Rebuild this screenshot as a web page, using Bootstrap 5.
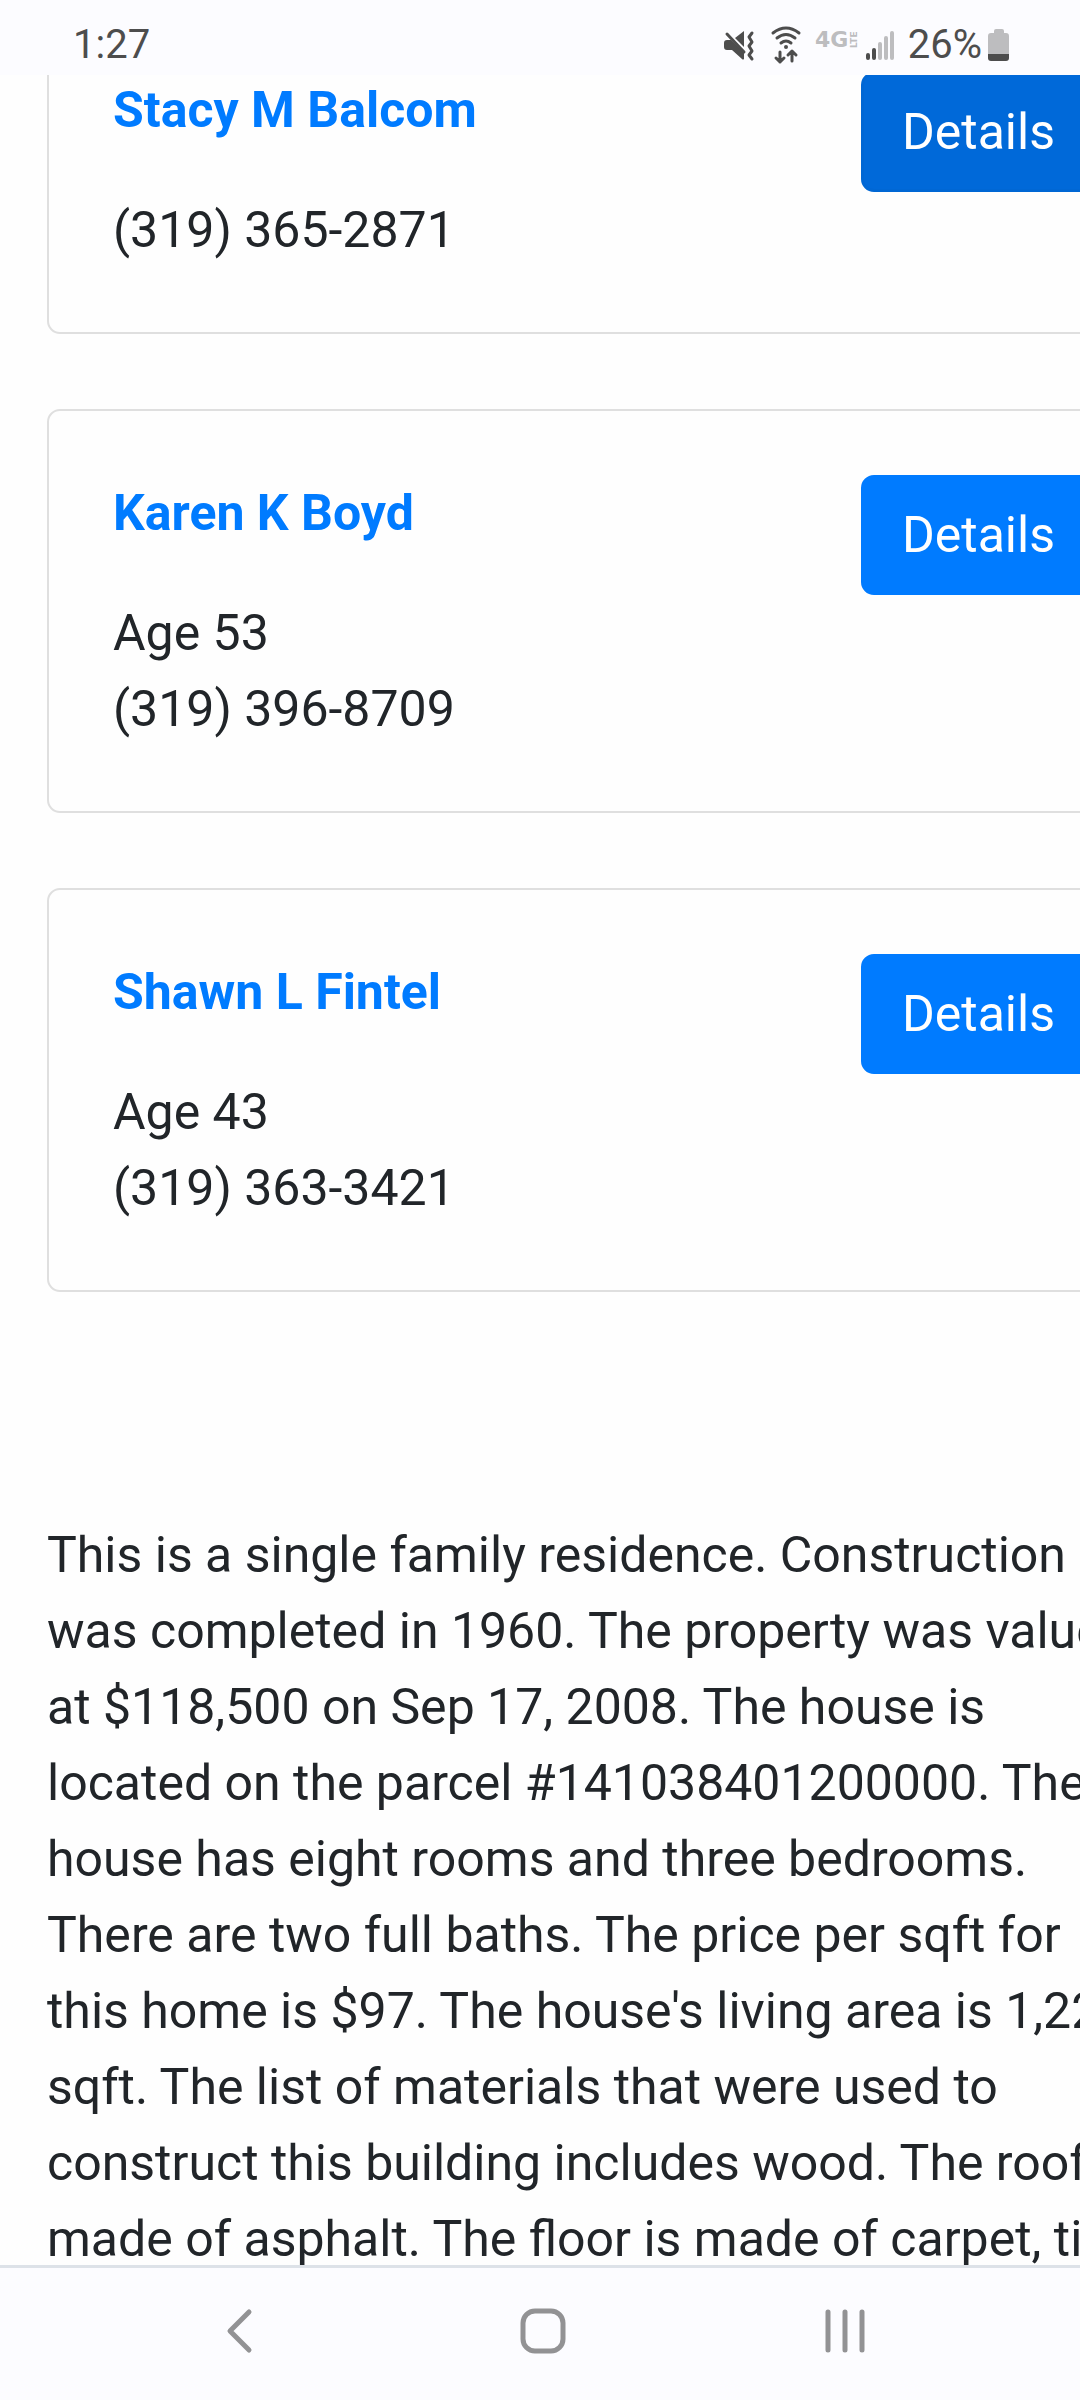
<!DOCTYPE html>
<html lang="en">
<head>
<meta charset="utf-8">
<meta name="viewport" content="width=device-width, initial-scale=1">
<title>Property residents</title>
<link href="https://cdn.jsdelivr.net/npm/bootstrap@5.3.0/dist/css/bootstrap.min.css" rel="stylesheet">
<script src="https://cdn.jsdelivr.net/npm/bootstrap@5.3.0/dist/js/bootstrap.bundle.min.js"></script>
<style>
  body {
    font-family: Roboto, "Liberation Sans", sans-serif;
    font-size: 50px;
    line-height: 76px;
    color: #212529;
    background: #fefefe;
  }
  .system-bar { background: #fcfcff; color: #4d4d4d; }
  .status-bar { height: 75px; padding: 0 69px 0 73px; font-size: 40px; line-height: 60px; }
  .status-text { padding-top: 15px; }
  .status-icons { gap: 13px; }
  .status-icons svg { height: 75px; }
  .network-group { gap: 6px; }
  .battery-level { gap: 5px; }
  .page-view { min-height: 0; }
  /* the page is wider than the screen and scrolled part of the way down */
  .page-sheet { margin: -69px -82px 0 47px; }
  .resident-list { gap: 75px; }
  .resident { border: 2px solid #dfdfdf; border-radius: 13px; background: #fefefe; }
  .resident .card-body { padding: 64px; }
  .resident-head { height: 120px; }
  .resident-name { color: #007bff; font-size: 50px; line-height: 76px; }
  .details-btn {
    --bs-btn-bg: #007bff;
    --bs-btn-border-color: #007bff;
    --bs-btn-hover-bg: #0069d9;
    --bs-btn-active-bg: #0069d9;
    --bs-btn-active-border-color: #0067d4;
    --bs-btn-font-size: 50px;
    --bs-btn-line-height: 76px;
    --bs-btn-padding-x: 38px;
    --bs-btn-padding-y: 19px;
    --bs-btn-border-width: 3px;
    --bs-btn-border-radius: 13px;
  }
  .summary { padding: 225px 18px 0 0; }
  .nav-keys { height: 135px; border-top: 3px solid #dde2e8; padding: 0 197px 6px 203px; }
  .nav-keys button { width: 76px; height: 76px; }
</style>
</head>
<body class="vh-100 d-flex flex-column overflow-hidden">

<header class="system-bar status-bar d-flex justify-content-between align-items-center flex-shrink-0">
  <span class="status-text">1:27</span>
  <div class="status-icons d-flex align-items-center">
    <svg width="36" viewBox="720 0 36 75" fill="#4d4d4d" aria-label="Muted">
      <path d="M734 38l9-7v16z"/>
      <path d="M723 43q0-3 3-3h4l13 13v6q-1 1-2 0l-10-9h-5q-3 0-3-3z"/>
      <path d="M726 34L743 52" stroke="#4d4d4d" stroke-width="3" stroke-linecap="round"/>
      <path d="M751 33l-3 4 3 5-3 4 3 5-3 4 3 4" fill="none" stroke="#4d4d4d" stroke-width="3" stroke-linecap="round" stroke-linejoin="round"/>
    </svg>
    <svg width="32" viewBox="769 0 32 75" fill="none" stroke="#4d4d4d" stroke-width="3" stroke-linecap="round" stroke-linejoin="round" aria-label="Wi-Fi">
      <path d="M772 33q13-10 26 0M776 38q9-7 18 0M780 43q5-4 10 0"/>
      <circle cx="785" cy="47" r="2" fill="#4d4d4d" stroke="none"/>
      <path d="M779 52v10m-4-4l4 4 4-4M791 61V51m-4 4l4-4 4 4"/>
    </svg>
    <div class="network-group d-flex align-items-center">
      <svg width="44" viewBox="815 0 44 75" fill="#bdbdbf" font-family="DejaVu Sans, sans-serif" font-weight="bold">
        <text x="815" y="47" font-size="22">4G</text>
        <text transform="translate(857 48) rotate(-90)" font-size="9">LTE</text>
      </svg>
      <div class="battery-level d-flex align-items-center">
        <svg width="38" viewBox="870 0 38 75" stroke-width="4" stroke-linecap="round" aria-label="Signal">
          <path d="M873 55v3M879 50v8" stroke="#4d4d4d"/>
          <path d="M885 44v14M891 38v20M897 33v25" stroke="#bdbdbf"/>
        </svg>
        <span class="status-text">26%</span>
        <svg width="24" viewBox="986 0 24 75" aria-label="Battery">
          <path d="M993 31q0-2 2-2h6q2 0 2 2v2h2q3 0 3 3v19h-21V36q0-3 3-3h3z" fill="#bdbdbf"/>
          <path d="M987 54h21v4q0 3-3 3h-15q-3 0-3-3z" fill="#4d4d4d"/>
        </svg>
      </div>
    </div>
  </div>
</header>

<main class="page-view flex-grow-1 overflow-hidden">
  <div class="page-sheet">
    <div class="resident-list d-flex flex-column">
      <article class="card resident">
        <div class="card-body">
          <div class="resident-head d-flex justify-content-between align-items-start">
            <h2 class="resident-name fw-bold mb-0">Stacy M Balcom</h2>
            <button type="button" class="btn btn-primary details-btn active">Details</button>
          </div>
          <div>(319) 365-2871</div>
        </div>
      </article>
      <article class="card resident">
        <div class="card-body">
          <div class="resident-head d-flex justify-content-between align-items-start">
            <h2 class="resident-name fw-bold mb-0">Karen K Boyd</h2>
            <button type="button" class="btn btn-primary details-btn">Details</button>
          </div>
          <div>Age 53</div>
          <div>(319) 396-8709</div>
        </div>
      </article>
      <article class="card resident">
        <div class="card-body">
          <div class="resident-head d-flex justify-content-between align-items-start">
            <h2 class="resident-name fw-bold mb-0">Shawn L Fintel</h2>
            <button type="button" class="btn btn-primary details-btn">Details</button>
          </div>
          <div>Age 43</div>
          <div>(319) 363-3421</div>
        </div>
      </article>
    </div>
    <p class="summary mb-0">This is a single family residence. Construction was completed in 1960. The property was valued at $118,500 on Sep 17, 2008. The house is located on the parcel #141038401200000. The house has eight rooms and three bedrooms. There are two full baths. The price per sqft for this home is $97. The house's living area is 1,220 sqft. The list of materials that were used to construct this building includes wood. The roof is made of asphalt. The floor is made of carpet, tile.</p>
  </div>
</main>

<nav class="system-bar nav-keys d-flex justify-content-between align-items-center flex-shrink-0" aria-label="System">
  <button type="button" class="btn border-0 p-0 d-flex" aria-label="Back">
    <svg width="76" height="76" viewBox="0 0 76 76" fill="none" stroke="#929294" stroke-width="5" stroke-linecap="round" stroke-linejoin="round"><path d="M46 19L27 38l19 19"/></svg>
  </button>
  <button type="button" class="btn border-0 p-0 d-flex" aria-label="Home">
    <svg width="76" height="76" viewBox="0 0 76 76" fill="none" stroke="#929294" stroke-width="5"><rect x="18" y="18" width="40" height="40" rx="12"/></svg>
  </button>
  <button type="button" class="btn border-0 p-0 d-flex" aria-label="Recent apps">
    <svg width="76" height="76" viewBox="0 0 76 76" stroke="#929294" stroke-width="5" stroke-linecap="round"><path d="M21 19v38M38 19v38M55 19v38"/></svg>
  </button>
</nav>

</body>
</html>
